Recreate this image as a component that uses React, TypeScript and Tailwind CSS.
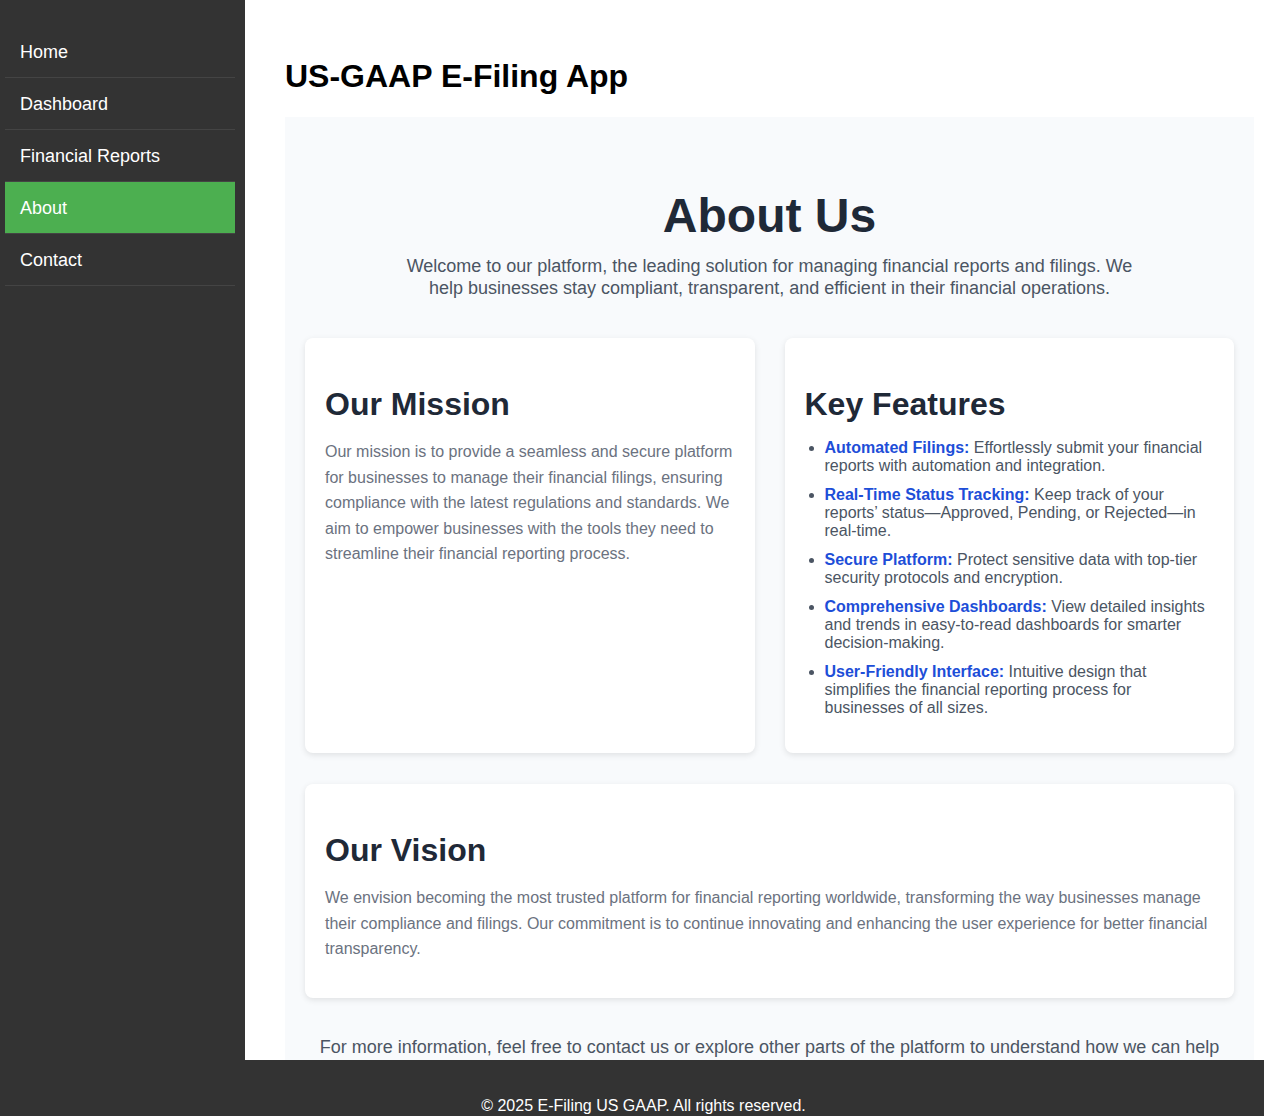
import React from "react";

const nav = ["Home", "Dashboard", "Financial Reports", "About", "Contact"];

const features = [
  { label: "Automated Filings:", text: "Effortlessly submit your financial reports with automation and integration." },
  { label: "Real-Time Status Tracking:", text: "Keep track of your reports’ status—Approved, Pending, or Rejected—in real-time." },
  { label: "Secure Platform:", text: "Protect sensitive data with top-tier security protocols and encryption." },
  { label: "Comprehensive Dashboards:", text: "View detailed insights and trends in easy-to-read dashboards for smarter decision-making." },
  { label: "User-Friendly Interface:", text: "Intuitive design that simplifies the financial reporting process for businesses of all sizes." },
];

export default function App() {
  return (
    <div className="h-screen flex flex-col overflow-hidden font-['Liberation_Sans',Arial,sans-serif]">
      <div className="flex-1 flex overflow-hidden">
        <aside className="w-[245px] shrink-0 bg-[#333] pt-[26px] pl-[5px] pr-[10px]">
          <ul>
            {nav.map((item) => (
              <li
                key={item}
                className={`px-[15px] pt-[16px] pb-[14px] text-[18px] leading-[21px] text-white border-b border-[#444] ${
                  item === "About" ? "bg-[#4CAF50] border-[#4CAF50]" : ""
                }`}
              >
                {item}
              </li>
            ))}
          </ul>
        </aside>

        <main className="flex-1 overflow-hidden bg-white pl-[40px] pr-[10px] pt-[58px]">
          <h1 className="text-[32px] leading-[37px] font-bold text-black mb-[22px]">US-GAAP E-Filing App</h1>

          <section className="bg-[#f8fafc] px-5 pt-[71px] pb-10">
            <h2 className="text-center text-[48px] leading-[55px] font-bold text-[#1f2937]">About Us</h2>
            <p className="mx-auto max-w-[740px] text-center text-[18px] leading-[22px] text-[#4b5563] mt-[12px]">
              Welcome to our platform, the leading solution for managing financial reports and filings. We help
              businesses stay compliant, transparent, and efficient in their financial operations.
            </p>

            <div className="grid grid-cols-2 gap-[30px] mt-[39px]">
              <div className="bg-white rounded-lg shadow-[0_2px_6px_rgba(0,0,0,0.1)] p-5">
                <h2 className="mt-[28px] mb-4 text-[32px] leading-[37px] font-bold text-[#1f2937]">Our Mission</h2>
                <p className="text-[16px] leading-[1.6] text-[#6b7280]">
                  Our mission is to provide a seamless and secure platform for businesses to manage their financial
                  filings, ensuring compliance with the latest regulations and standards. We aim to empower businesses
                  with the tools they need to streamline their financial reporting process.
                </p>
              </div>

              <div className="bg-white rounded-lg shadow-[0_2px_6px_rgba(0,0,0,0.1)] p-5">
                <h2 className="mt-[28px] mb-4 text-[32px] leading-[37px] font-bold text-[#1f2937]">Key Features</h2>
                <ul className="list-disc pl-5 mb-4 text-[16px] leading-[18px] text-[#4b5563] marker:text-[#4b5563]">
                  {features.map((f) => (
                    <li key={f.label} className="mb-[11px] last:mb-0">
                      <strong className="text-[#1d4ed8] font-bold">{f.label}</strong> {f.text}
                    </li>
                  ))}
                </ul>
              </div>
            </div>

            <div className="bg-white rounded-lg shadow-[0_2px_6px_rgba(0,0,0,0.1)] p-5 mt-[31px]">
              <h2 className="mt-[28px] mb-4 text-[32px] leading-[37px] font-bold text-[#1f2937]">Our Vision</h2>
              <p className="text-[16px] leading-[1.6] text-[#6b7280] mb-4">
                We envision becoming the most trusted platform for financial reporting worldwide, transforming the way
                businesses manage their compliance and filings. Our commitment is to continue innovating and enhancing
                the user experience for better financial transparency.
              </p>
            </div>

            <p className="mx-auto max-w-[900px] mt-[38px] text-center text-[18px] leading-[22px] text-[#4b5563]">
              For more information, feel free to contact us or explore other parts of the platform to understand how we
              can help your business grow.
            </p>
          </section>
        </main>
      </div>

      <footer className="h-[56px] shrink-0 overflow-hidden bg-[#333] text-white text-center text-[16px] leading-[18px] pt-[37px] pl-[23px]">
        © 2025 E-Filing US GAAP. All rights reserved.
      </footer>
    </div>
  );
}
